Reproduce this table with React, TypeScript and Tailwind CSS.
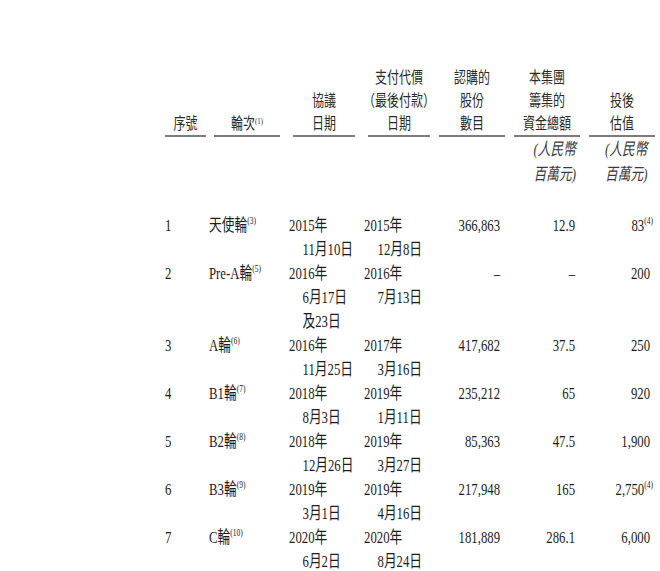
import React from "react";

type Row = {
  n: string;
  r: string;
  rs: string;
  d1: string[];
  d2: string[];
  s: string;
  f: string;
  v: string;
  vs?: string;
};

const rows: Row[] = [
  { n: "1", r: "天使輪", rs: "(3)", d1: ["2015年", "11月10日"], d2: ["2015年", "12月8日"], s: "366,863", f: "12.9", v: "83", vs: "(4)" },
  { n: "2", r: "Pre-A輪", rs: "(5)", d1: ["2016年", "6月17日", "及23日"], d2: ["2016年", "7月13日"], s: "–", f: "–", v: "200" },
  { n: "3", r: "A輪", rs: "(6)", d1: ["2016年", "11月25日"], d2: ["2017年", "3月16日"], s: "417,682", f: "37.5", v: "250" },
  { n: "4", r: "B1輪", rs: "(7)", d1: ["2018年", "8月3日"], d2: ["2019年", "1月11日"], s: "235,212", f: "65", v: "920" },
  { n: "5", r: "B2輪", rs: "(8)", d1: ["2018年", "12月26日"], d2: ["2019年", "3月27日"], s: "85,363", f: "47.5", v: "1,900" },
  { n: "6", r: "B3輪", rs: "(9)", d1: ["2019年", "3月1日"], d2: ["2019年", "4月16日"], s: "217,948", f: "165", v: "2,750", vs: "(4)" },
  { n: "7", r: "C輪", rs: "(10)", d1: ["2020年", "6月2日"], d2: ["2020年", "8月24日"], s: "181,889", f: "286.1", v: "6,000" },
];

function HCell({
  outer,
  inner,
  lines,
}: {
  outer: string;
  inner: string;
  lines: React.ReactNode[];
}) {
  return (
    <div className={outer}>
      <div className={inner}>
        <div className="flex flex-col items-center origin-center scale-x-75 text-[16px] leading-[23px] font-['Noto_Sans_CJK_TC',sans-serif] text-[#2b2b2b]">
          {lines.map((l, i) => (
            <div key={i} className="whitespace-nowrap">
              {l}
            </div>
          ))}
        </div>
        <div className="mt-[1px] h-[2px] bg-[#7c7c7c]" />
      </div>
    </div>
  );
}

function DateCell({ lines }: { lines: string[] }) {
  return (
    <div className="origin-left scale-x-75 whitespace-nowrap">
      {lines.map((l, i) => (
        <div key={i} className={i === 0 ? "" : "pl-[18px]"}>
          {l}
        </div>
      ))}
    </div>
  );
}

export default function App() {
  return (
    <div className="w-[660px] h-[571px] overflow-hidden bg-white pl-[164px] pt-[65px] text-[#1c1c1c]">
      {/* header */}
      <div className="flex items-end">
        <HCell outer="w-[45px]" inner="ml-[1px] w-[41px]" lines={["序號"]} />
        <HCell
          outer="w-[80px]"
          inner="ml-[5px] w-[66px]"
          lines={[
            <span>
              輪次
              <sup className="text-[9px] font-['Liberation_Serif',serif] top-[-0.6em]">(1)</sup>
            </span>,
          ]}
        />
        <HCell outer="w-[75px]" inner="ml-[4px] w-[62px]" lines={["協議", "日期"]} />
        <HCell outer="w-[75px]" inner="ml-[4px] w-[62px]" lines={["支付代價", "（最後付款）", "日期"]} />
        <HCell outer="w-[75px]" inner="w-[66px]" lines={["認購的", "股份", "數目"]} />
        <HCell outer="w-[75px]" inner="w-[66px]" lines={["本集團", "籌集的", "資金總額"]} />
        <HCell outer="w-[71px]" inner="w-[66px]" lines={["投後", "估值"]} />
      </div>

      {/* units */}
      <div className="flex text-[17px] leading-[25px] italic font-['Liberation_Serif','Noto_Sans_CJK_TC',serif] text-[#3a3a3a]">
        <div className="w-[350px]" />
        <div className="w-[75px]">
          <div className="w-[62px] origin-right scale-x-75 text-right whitespace-nowrap">
            <div>(人民幣</div>
            <div>百萬元)</div>
          </div>
        </div>
        <div className="w-[71px] pl-[16px]">
          <div className="origin-left scale-x-75 whitespace-nowrap">
            <div>(人民幣</div>
            <div>百萬元)</div>
          </div>
        </div>
      </div>

      {/* body */}
      <div className="mt-[27px] flex flex-col text-[17px] leading-[24px] font-['Liberation_Serif','Noto_Sans_CJK_TC',serif]">
        {rows.map((row) => (
          <div key={row.n} className="flex items-start">
            <div className="w-[45px] pl-[1px]">
              <div className="origin-left scale-x-75">{row.n}</div>
            </div>
            <div className="w-[80px]">
              <div className="origin-left scale-x-75 whitespace-nowrap">
                {row.r}
                <sup className="text-[10px] top-[-0.7em]">{row.rs}</sup>
              </div>
            </div>
            <div className="w-[75px]">
              <DateCell lines={row.d1} />
            </div>
            <div className="w-[75px]">
              <DateCell lines={row.d2} />
            </div>
            <div className="w-[75px]">
              <div className="w-[61px] origin-right scale-x-75 text-right whitespace-nowrap">{row.s}</div>
            </div>
            <div className="w-[75px]">
              <div className="w-[61px] origin-right scale-x-75 text-right whitespace-nowrap">{row.f}</div>
            </div>
            <div className="w-[71px]">
              <div className="w-[61px] origin-right scale-x-75 text-right whitespace-nowrap">
                {row.v}
                {row.vs ? (
                  <sup className="text-[10px] top-[-0.7em] -mr-[4px]">{row.vs}</sup>
                ) : null}
              </div>
            </div>
          </div>
        ))}
      </div>
    </div>
  );
}
